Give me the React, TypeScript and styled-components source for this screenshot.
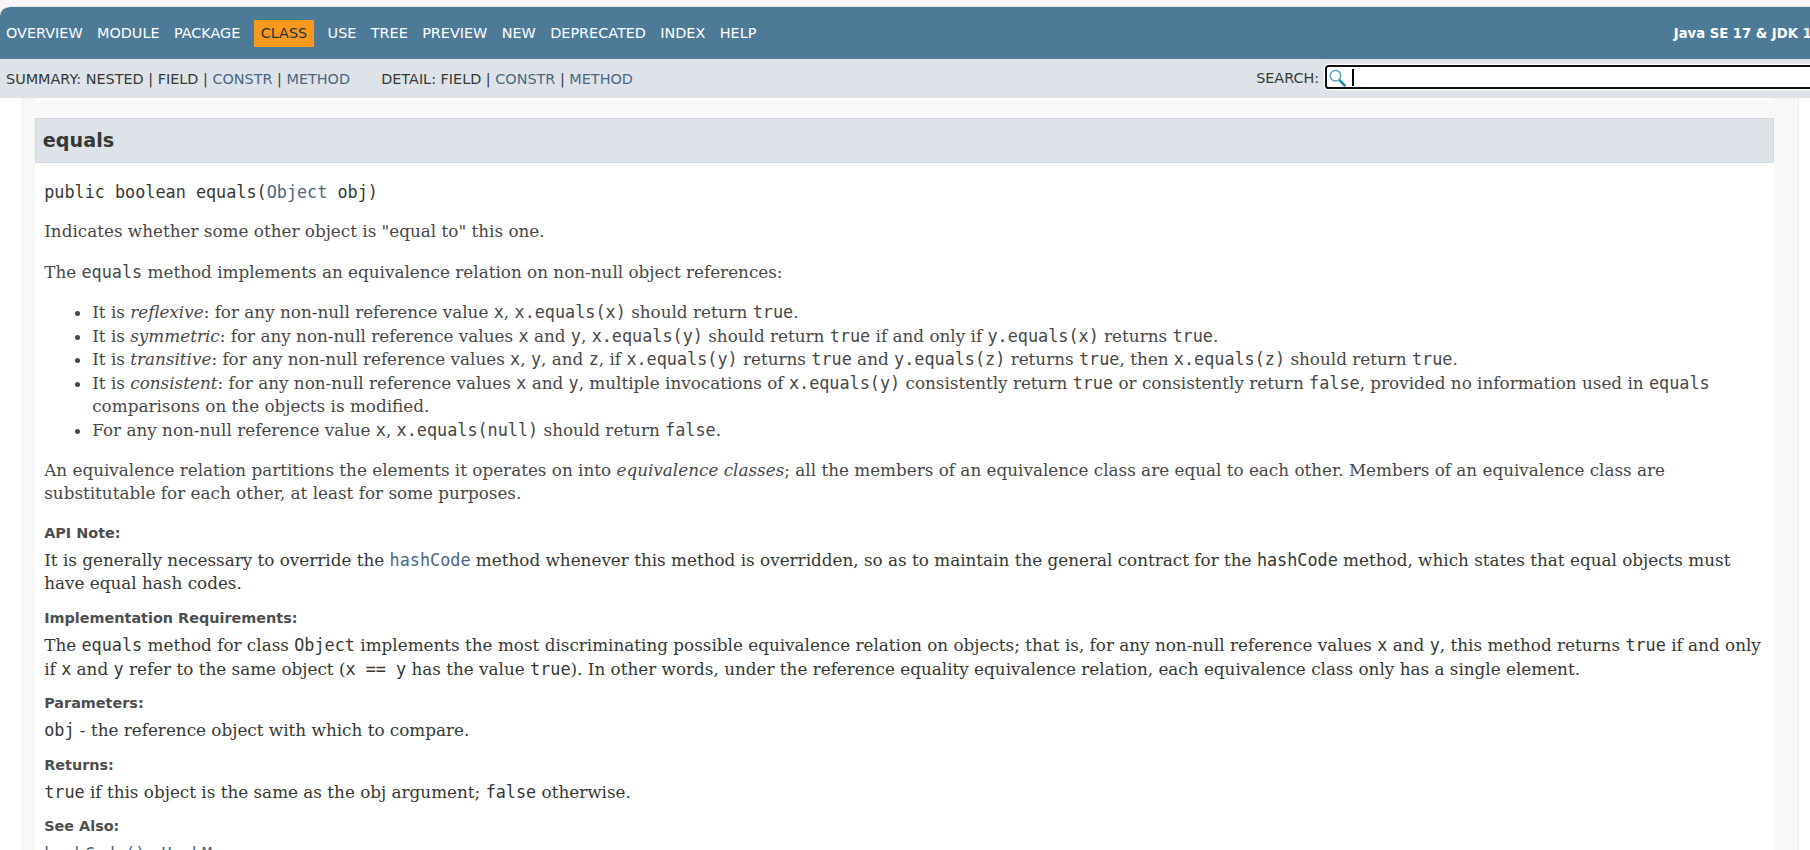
import React from "react";
import styled, { createGlobalStyle } from "styled-components";

const sans = '"DejaVu Sans", Arial, Helvetica, sans-serif';
const serif = '"DejaVu Serif", Georgia, "Times New Roman", Times, serif';
const mono = '"DejaVu Sans Mono", monospace';

const GlobalStyle = createGlobalStyle`
  *, *::before, *::after { box-sizing: border-box; }
  html, body { margin: 0; background: #fff; }
  body {
    zoom: 1.2;
    color: #353833;
    font-family: ${sans};
    font-size: 14px;
    line-height: 1.4;
  }
`;

const Page = styled.div`
  height: calc(100vh / 1.2);
  display: flex;
  flex-direction: column;
  overflow: hidden;
`;

const Header = styled.header`
  flex: none;
  background: #f7f7f7;
  padding-top: 5px;
`;

const TopNav = styled.nav`
  display: flex;
  align-items: center;
  justify-content: space-between;
  height: 44px;
  margin-right: -18px;
  padding: 1px 9px 0 5px;
  border-top: 1px solid #e8e8e8;
  border-radius: 8px 0 0 0;
  background: #4d7a97;
  background-clip: padding-box;
  color: #fff;
  font-size: 12px;
  line-height: 13px;
`;

const NavList = styled.ul`
  display: flex;
  align-items: center;
  gap: 12px;
  margin: 0;
  padding: 0;
  list-style: none;
  text-transform: uppercase;
`;

const NavLink = styled.a`
  color: #fff;
  text-decoration: none;
`;

const CurrentItem = styled.li`
  margin: 0 -1px;
  padding: 5px 6px;
  background: #f8981d;
  color: #253441;
`;

const About = styled.strong`
  font-size: 11px;
  white-space: nowrap;
`;

const SubNav = styled.div`
  display: flex;
  align-items: center;
  justify-content: space-between;
  height: 33px;
  margin-right: -18px;
  padding-left: 5px;
  background: #dee3e9;
  font-size: 12px;
  line-height: 14px;
`;

const SubNavLists = styled.div`
  display: flex;
  gap: 26px;
  padding-top: 2px;
  text-transform: uppercase;
`;

const Link = styled.a`
  color: #4a6782;
  text-decoration: none;
`;

const Search = styled.form`
  display: flex;
  align-items: center;
  gap: 5px;
  text-transform: uppercase;
`;

const SearchBox = styled.div`
  position: relative;
  width: 422px;
  margin-bottom: 2px;
`;

const SearchInput = styled.input`
  display: block;
  width: 100%;
  height: 20px;
  padding: 0 0 0 20px;
  border: 2px solid #101010;
  border-radius: 3px;
  box-shadow: 0 0 0 1px #fff;
  outline: none;
  background: #fff;
  font: 13px ${sans};
  caret-color: transparent;
`;

const SearchIcon = styled.svg`
  position: absolute;
  left: 3px;
  top: 3px;
  width: 14px;
  height: 15px;
`;

const Caret = styled.span`
  position: absolute;
  left: 22px;
  top: 3px;
  width: 2px;
  height: 14px;
  background: #000;
`;

const Main = styled.main`
  flex: 1;
  min-height: 0;
  margin: 0 9px 0 18px;
  padding: 0 20px 0 10px;
  border: solid #ededed;
  border-width: 0 1px;
  background: #f8f8f8;
`;

const PreviousMember = styled.div`
  height: 2px;
  margin-bottom: 14px;
  background: #fff;
`;

const Member = styled.section`
  background: #fff;
`;

const MemberTitle = styled.h3`
  margin: 0;
  padding: 8px 6px 6px;
  border: 1px solid #d0d9e0;
  background: #dee3e9;
  font-size: 16px;
  line-height: 22px;
`;

const MemberBody = styled.div`
  padding: 14px 5px 14px 8px;
`;

const Signature = styled.div`
  font-family: ${mono};
  line-height: 20px;
`;

const Description = styled.div`
  color: #474747;
  font-family: ${serif};

  p, ul { margin: 14px 0; }
  ul { padding-left: 40px; }
`;

const Code = styled.code`
  font-family: ${mono};
  font-size: 14px;
`;

const Notes = styled.dl`
  margin: 14px 0 0;
`;

const NoteLabel = styled.dt`
  color: #4e4e4e;
  font-size: 12px;
  font-weight: bold;
`;

const NoteText = styled.dd`
  margin: 5px 0 10px;
  font-family: ${serif};
`;

const SeeList = styled.ul`
  display: flex;
  gap: 9px;
  margin: 0;
  padding: 0;
  list-style: none;
`;

const before = ["Overview", "Module", "Package"];
const after = ["Use", "Tree", "Preview", "New", "Deprecated", "Index", "Help"];

const NavItem = ({ label }: { label: string }) => (
  <li>
    <NavLink href="#">{label}</NavLink>
  </li>
);

export default function App() {
  return (
    <Page>
      <GlobalStyle />
      <Header>
        <TopNav>
          <NavList>
            {before.map((label) => (
              <NavItem key={label} label={label} />
            ))}
            <CurrentItem>Class</CurrentItem>
            {after.map((label) => (
              <NavItem key={label} label={label} />
            ))}
          </NavList>
          <About>Java SE 17 &amp; JDK 17</About>
        </TopNav>
        <SubNav>
          <SubNavLists>
            <div>
              Summary: Nested | Field | <Link href="#">Constr</Link> | <Link href="#">Method</Link>
            </div>
            <div>
              Detail: Field | <Link href="#">Constr</Link> | <Link href="#">Method</Link>
            </div>
          </SubNavLists>
          <Search>
            <label htmlFor="search">Search:</label>
            <SearchBox>
              <SearchInput id="search" type="text" />
              <SearchIcon viewBox="0 0 14 15" fill="none" aria-hidden="true">
                <path d="M9 9.5l4 4.2" stroke="#2484bd" strokeWidth="2.2" strokeLinecap="round" />
                <circle cx="5.4" cy="5.6" r="4.4" stroke="#5fa5c8" strokeWidth="1.3" />
              </SearchIcon>
              <Caret />
            </SearchBox>
          </Search>
        </SubNav>
      </Header>
      <Main>
        <PreviousMember />
        <Member>
          <MemberTitle>equals</MemberTitle>
          <MemberBody>
            <Signature>
              public boolean equals(<Link href="#">Object</Link> obj)
            </Signature>
            <Description>
              <p>Indicates whether some other object is "equal to" this one.</p>
              <p>
                The <Code>equals</Code> method implements an equivalence relation on non-null object references:
              </p>
              <ul>
                <li>
                  It is <i>reflexive</i>: for any non-null reference value <Code>x</Code>, <Code>x.equals(x)</Code>{" "}
                  should return <Code>true</Code>.
                </li>
                <li>
                  It is <i>symmetric</i>: for any non-null reference values <Code>x</Code> and <Code>y</Code>,{" "}
                  <Code>x.equals(y)</Code> should return <Code>true</Code> if and only if <Code>y.equals(x)</Code>{" "}
                  returns <Code>true</Code>.
                </li>
                <li>
                  It is <i>transitive</i>: for any non-null reference values <Code>x</Code>, <Code>y</Code>, and{" "}
                  <Code>z</Code>, if <Code>x.equals(y)</Code> returns <Code>true</Code> and{" "}
                  <Code>y.equals(z)</Code> returns <Code>true</Code>, then <Code>x.equals(z)</Code> should return{" "}
                  <Code>true</Code>.
                </li>
                <li>
                  It is <i>consistent</i>: for any non-null reference values <Code>x</Code> and <Code>y</Code>,
                  multiple invocations of <Code>x.equals(y)</Code> consistently return <Code>true</Code> or
                  consistently return <Code>false</Code>, provided no information used in <Code>equals</Code>{" "}
                  comparisons on the objects is modified.
                </li>
                <li>
                  For any non-null reference value <Code>x</Code>, <Code>x.equals(null)</Code> should return{" "}
                  <Code>false</Code>.
                </li>
              </ul>
              <p>
                An equivalence relation partitions the elements it operates on into <i>equivalence classes</i>; all
                the members of an equivalence class are equal to each other. Members of an equivalence class are
                substitutable for each other, at least for some purposes.
              </p>
            </Description>
            <Notes>
              <NoteLabel>API Note:</NoteLabel>
              <NoteText>
                It is generally necessary to override the{" "}
                <Link href="#">
                  <Code>hashCode</Code>
                </Link>{" "}
                method whenever this method is overridden, so as to maintain the general contract for the{" "}
                <Code>hashCode</Code> method, which states that equal objects must have equal hash codes.
              </NoteText>
              <NoteLabel>Implementation Requirements:</NoteLabel>
              <NoteText>
                The <Code>equals</Code> method for class <Code>Object</Code> implements the most discriminating
                possible equivalence relation on objects; that is, for any non-null reference values <Code>x</Code>{" "}
                and <Code>y</Code>, this method returns <Code>true</Code> if and only if <Code>x</Code> and{" "}
                <Code>y</Code> refer to the same object (<Code>x == y</Code> has the value <Code>true</Code>). In
                other words, under the reference equality equivalence relation, each equivalence class only has a
                single element.
              </NoteText>
              <NoteLabel>Parameters:</NoteLabel>
              <NoteText>
                <Code>obj</Code> - the reference object with which to compare.
              </NoteText>
              <NoteLabel>Returns:</NoteLabel>
              <NoteText>
                <Code>true</Code> if this object is the same as the obj argument; <Code>false</Code> otherwise.
              </NoteText>
              <NoteLabel>See Also:</NoteLabel>
              <NoteText>
                <SeeList>
                  <li>
                    <Link href="#">
                      <Code>hashCode()</Code>
                    </Link>
                    ,
                  </li>
                  <li>
                    <Link href="#">
                      <Code>HashMap</Code>
                    </Link>
                  </li>
                </SeeList>
              </NoteText>
            </Notes>
          </MemberBody>
        </Member>
      </Main>
    </Page>
  );
}
